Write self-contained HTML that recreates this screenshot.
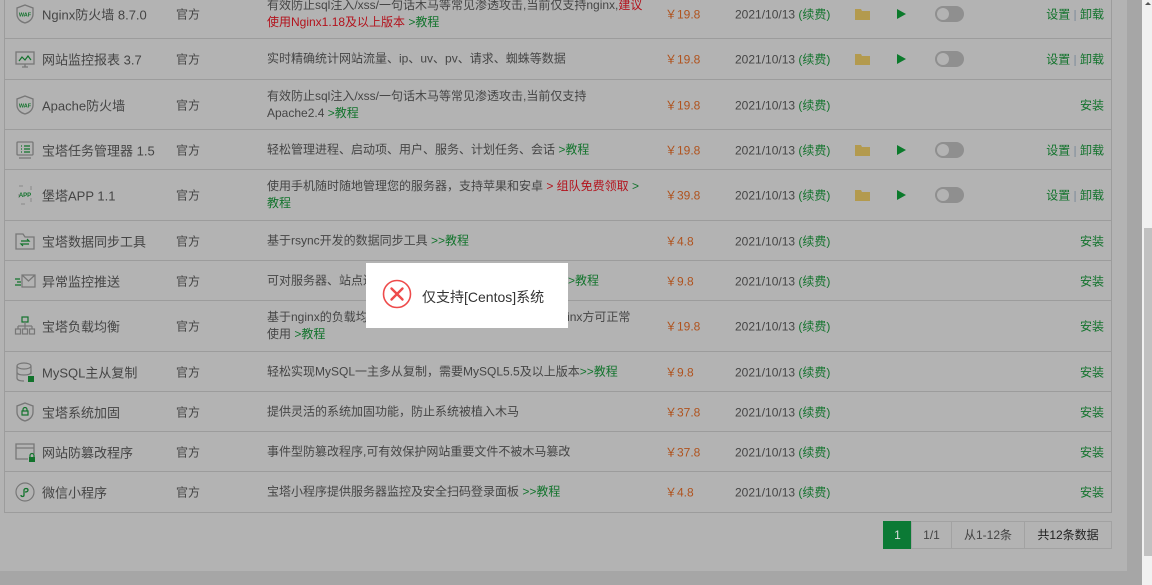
<!DOCTYPE html>
<html><head><meta charset="utf-8">
<style>
*{margin:0;padding:0;box-sizing:border-box}
body{width:1152px;height:585px;overflow:hidden;background:#a6a6a6;font-family:"Liberation Sans","Noto Sans CJK SC",sans-serif;color:#454545;position:relative}
.card{position:absolute;left:0;top:0;width:1127px;height:571px;background:#b3b3b3}
.tbl{position:absolute;left:4px;top:-10px;width:1108px;height:523px;border-left:1px solid #9c9c9c;border-right:1px solid #9c9c9c;border-bottom:1px solid #9c9c9c}
.row{position:absolute;left:0;width:1106px;border-bottom:1px solid #9c9c9c}
.row>*{position:absolute;top:50%;transform:translateY(-50%)}
.ic{left:9px;width:22px;height:22px}
.nm{left:37px;font-size:13px;white-space:nowrap}
.of{left:171px;font-size:12px}
.ds{left:262px;width:376px;font-size:12px;line-height:17px}
.pr{left:660px;font-size:12px;color:#b0531e}
.dt{left:730px;font-size:12px;white-space:nowrap}
.g{color:#12732c}
.r{color:#b3121c}
.fd{left:850px;width:16px;height:12px}
.pl{left:892px;width:0;height:0;border-left:9px solid #0b7a2b;border-top:5.5px solid transparent;border-bottom:5.5px solid transparent}
.tg{left:930px;width:29px;height:16px;border-radius:8px;background:#8f8f8f}
.tg:after{content:"";position:absolute;left:2px;top:2px;width:12px;height:12px;border-radius:50%;background:#b3b3b3}
.ac{right:7px;font-size:12px;color:#12732c;white-space:nowrap}
.ac i{font-style:normal;color:#7a8a99}
.modal{position:absolute;left:366px;top:263px;width:202px;height:65px;background:#fff}
.modal .t{position:absolute;left:56px;top:24px;font-size:14px;color:#333}
.pg{position:absolute;top:521px;height:28px;font-size:12px;line-height:26px;text-align:center;border:1px solid #a2a2a2;color:#444}
.sb{position:absolute;left:1142px;top:0;width:10px;height:585px;background:#f1f1f1}
.th{position:absolute;left:1144px;top:228px;width:8px;height:328px;background:#c1c1c1}
</style></head><body>
<div class="card">
<div class="tbl">
<div class="row" style="top:0;height:49px">
<svg class="ic" viewBox="0 0 22 22"><path d="M11 2 L19 5 V11 C19 16 15 19 11 20 C7 19 3 16 3 11 V5 Z" fill="none" stroke="#777" stroke-width="1.3"/><text x="11" y="13.5" font-size="5.5" text-anchor="middle" fill="#12732c" font-family="Liberation Sans" font-weight="bold">WAF</text></svg>
<div class="nm">Nginx防火墙 8.7.0</div><div class="of">官方</div>
<div class="ds">有效防止sql注入/xss/一句话木马等常见渗透攻击,当前仅支持nginx,<span class="r">建议使用Nginx1.18及以上版本</span> <span class="g">&gt;教程</span></div>
<div class="pr">￥19.8</div><div class="dt">2021/10/13 <span class="g">(续费)</span></div>
<svg class="fd" viewBox="0 0 16 12"><path d="M0 1h6l1 2h8v9H0z" fill="#b39a4e"/></svg><div class="pl"></div><div class="tg"></div>
<div class="ac">设置 <i>|</i> 卸载</div></div>
<div class="row" style="top:49px;height:41px">
<svg class="ic" viewBox="0 0 22 22"><rect x="2" y="4" width="18" height="12" fill="none" stroke="#777" stroke-width="1.3"/><path d="M5 13l3-4 3 3 3-4 3 4" fill="none" stroke="#12732c" stroke-width="1.2"/><path d="M8 19h6M11 16v3" stroke="#777" stroke-width="1.3"/></svg>
<div class="nm">网站监控报表 3.7</div><div class="of">官方</div>
<div class="ds">实时精确统计网站流量、ip、uv、pv、请求、蜘蛛等数据</div>
<div class="pr">￥19.8</div><div class="dt">2021/10/13 <span class="g">(续费)</span></div>
<svg class="fd" viewBox="0 0 16 12"><path d="M0 1h6l1 2h8v9H0z" fill="#b39a4e"/></svg><div class="pl"></div><div class="tg"></div>
<div class="ac">设置 <i>|</i> 卸载</div></div>
<div class="row" style="top:90px;height:50px">
<svg class="ic" viewBox="0 0 22 22"><path d="M11 2 L19 5 V11 C19 16 15 19 11 20 C7 19 3 16 3 11 V5 Z" fill="none" stroke="#777" stroke-width="1.3"/><text x="11" y="13.5" font-size="5.5" text-anchor="middle" fill="#12732c" font-family="Liberation Sans" font-weight="bold">WAF</text></svg>
<div class="nm">Apache防火墙</div><div class="of">官方</div>
<div class="ds">有效防止sql注入/xss/一句话木马等常见渗透攻击,当前仅支持<br>Apache2.4 <span class="g">&gt;教程</span></div>
<div class="pr">￥19.8</div><div class="dt">2021/10/13 <span class="g">(续费)</span></div>
<div class="ac">安装</div></div>
<div class="row" style="top:140px;height:40px">
<svg class="ic" viewBox="0 0 22 22"><rect x="3" y="3" width="16" height="13" rx="1" fill="none" stroke="#777" stroke-width="1.3"/><path d="M7 7h1M7 10h1M7 13h1M10 7h6M10 10h6M10 13h6" stroke="#12732c" stroke-width="1.2"/><path d="M5 19h12" stroke="#777" stroke-width="1.3"/></svg>
<div class="nm">宝塔任务管理器 1.5</div><div class="of">官方</div>
<div class="ds">轻松管理进程、启动项、用户、服务、计划任务、会话 <span class="g">&gt;教程</span></div>
<div class="pr">￥19.8</div><div class="dt">2021/10/13 <span class="g">(续费)</span></div>
<svg class="fd" viewBox="0 0 16 12"><path d="M0 1h6l1 2h8v9H0z" fill="#b39a4e"/></svg><div class="pl"></div><div class="tg"></div>
<div class="ac">设置 <i>|</i> 卸载</div></div>
<div class="row" style="top:180px;height:51px">
<svg class="ic" viewBox="0 0 22 22"><rect x="5" y="2" width="12" height="18" fill="none" stroke="#888" stroke-width="1" stroke-dasharray="4 8"/><text x="11" y="13" font-size="6" text-anchor="middle" fill="#12732c" font-family="Liberation Sans" font-weight="bold">APP</text></svg>
<div class="nm">堡塔APP 1.1</div><div class="of">官方</div>
<div class="ds">使用手机随时随地管理您的服务器，支持苹果和安卓 <span class="r">&gt; 组队免费领取</span> <span class="g">&gt; 教程</span></div>
<div class="pr">￥39.8</div><div class="dt">2021/10/13 <span class="g">(续费)</span></div>
<svg class="fd" viewBox="0 0 16 12"><path d="M0 1h6l1 2h8v9H0z" fill="#b39a4e"/></svg><div class="pl"></div><div class="tg"></div>
<div class="ac">设置 <i>|</i> 卸载</div></div>
<div class="row" style="top:231px;height:40px">
<svg class="ic" viewBox="0 0 22 22"><path d="M2 4h7l2 3h9v12H2z" fill="none" stroke="#777" stroke-width="1.3"/><path d="M7 11h8l-2-2M15 14H7l2 2" fill="none" stroke="#12732c" stroke-width="1.2"/></svg>
<div class="nm">宝塔数据同步工具</div><div class="of">官方</div>
<div class="ds">基于rsync开发的数据同步工具 <span class="g">&gt;&gt;教程</span></div>
<div class="pr">￥4.8</div><div class="dt">2021/10/13 <span class="g">(续费)</span></div>
<div class="ac">安装</div></div>
<div class="row" style="top:271px;height:40px">
<svg class="ic" viewBox="0 0 22 22"><path d="M8 5h13v12H8z M8 5l6.5 6L21 5" fill="none" stroke="#777" stroke-width="1.2"/><path d="M1 9h5M3 12h4M1 15h6" stroke="#12732c" stroke-width="1.2"/></svg>
<div class="nm">异常监控推送</div><div class="of">官方</div>
<div class="ds">可对服务器、站点进行异常监控推送，仅支持Centos7.x<span class="g">&gt;&gt;教程</span></div>
<div class="pr">￥9.8</div><div class="dt">2021/10/13 <span class="g">(续费)</span></div>
<div class="ac">安装</div></div>
<div class="row" style="top:311px;height:51px">
<svg class="ic" viewBox="0 0 22 22"><rect x="8" y="2" width="6" height="5" fill="none" stroke="#12732c" stroke-width="1.2"/><path d="M11 7v4M4 11h14M4 11v3M11 11v3M18 11v3" fill="none" stroke="#777" stroke-width="1.2"/><rect x="1.5" y="14" width="5" height="5" fill="none" stroke="#777" stroke-width="1.2"/><rect x="8.5" y="14" width="5" height="5" fill="none" stroke="#777" stroke-width="1.2"/><rect x="15.5" y="14" width="5" height="5" fill="none" stroke="#777" stroke-width="1.2"/></svg>
<div class="nm">宝塔负载均衡</div><div class="of">官方</div>
<div class="ds">基于nginx的负载均衡，需要安装Nginx1.18以上版本及nginx方可正常<br>使用 <span class="g">&gt;教程</span></div>
<div class="pr">￥19.8</div><div class="dt">2021/10/13 <span class="g">(续费)</span></div>
<div class="ac">安装</div></div>
<div class="row" style="top:362px;height:40px">
<svg class="ic" viewBox="0 0 22 22"><ellipse cx="10" cy="5" rx="7" ry="3" fill="none" stroke="#777" stroke-width="1.2"/><path d="M3 5v12c0 2 3 3 7 3M17 5v8M3 11c0 2 3 3 7 3s7-1 7-3" fill="none" stroke="#777" stroke-width="1.2"/><rect x="14" y="15" width="6" height="6" fill="#12732c"/></svg>
<div class="nm">MySQL主从复制</div><div class="of">官方</div>
<div class="ds">轻松实现MySQL一主多从复制，需要MySQL5.5及以上版本<span class="g">&gt;&gt;教程</span></div>
<div class="pr">￥9.8</div><div class="dt">2021/10/13 <span class="g">(续费)</span></div>
<div class="ac">安装</div></div>
<div class="row" style="top:402px;height:40px">
<svg class="ic" viewBox="0 0 22 22"><path d="M11 2 L19 5 V11 C19 16 15 19 11 20 C7 19 3 16 3 11 V5 Z" fill="none" stroke="#777" stroke-width="1.3"/><rect x="8" y="10" width="6" height="4" fill="none" stroke="#12732c" stroke-width="1.2"/><path d="M9 10V8.5a2 2 0 0 1 4 0V10" fill="none" stroke="#12732c" stroke-width="1.2"/></svg>
<div class="nm">宝塔系统加固</div><div class="of">官方</div>
<div class="ds">提供灵活的系统加固功能，防止系统被植入木马</div>
<div class="pr">￥37.8</div><div class="dt">2021/10/13 <span class="g">(续费)</span></div>
<div class="ac">安装</div></div>
<div class="row" style="top:442px;height:40px">
<svg class="ic" viewBox="0 0 22 22"><path d="M14 18H2V3h18v10M2 7h18" fill="none" stroke="#777" stroke-width="1.3"/><rect x="15" y="16" width="6" height="5" fill="#12732c"/><path d="M16 16v-1.5a2 2 0 0 1 4 0V16" fill="none" stroke="#12732c" stroke-width="1.2"/></svg>
<div class="nm">网站防篡改程序</div><div class="of">官方</div>
<div class="ds">事件型防篡改程序,可有效保护网站重要文件不被木马篡改</div>
<div class="pr">￥37.8</div><div class="dt">2021/10/13 <span class="g">(续费)</span></div>
<div class="ac">安装</div></div>
<div class="row" style="top:482px;height:40px;border-bottom:none">
<svg class="ic" viewBox="0 0 22 22"><circle cx="11" cy="11" r="9" fill="none" stroke="#777" stroke-width="1.2"/><path d="M7 14c0 2 3 2 3 0V9c0-2 4-2 4 0s-2 2-3 2" fill="none" stroke="#12732c" stroke-width="1.3"/></svg>
<div class="nm">微信小程序</div><div class="of">官方</div>
<div class="ds">宝塔小程序提供服务器监控及安全扫码登录面板 <span class="g">&gt;&gt;教程</span></div>
<div class="pr">￥4.8</div><div class="dt">2021/10/13 <span class="g">(续费)</span></div>
<div class="ac">安装</div></div>
</div>
<div class="pg" style="left:883px;width:29px;background:#0b7a35;border-color:#0b7a35;color:#ddd">1</div>
<div class="pg" style="left:911px;width:41px">1/1</div>
<div class="pg" style="left:951px;width:74px">从1-12条</div>
<div class="pg" style="left:1024px;width:88px;color:#222">共12条数据</div>
</div>
<div class="modal">
<svg style="position:absolute;left:16px;top:16px" width="30" height="30" viewBox="0 0 30 30"><circle cx="15" cy="15" r="13.5" fill="none" stroke="#ee4b4b" stroke-width="1.6"/><path d="M9.5 9.5l11 11M20.5 9.5l-11 11" stroke="#ee4b4b" stroke-width="2.4" stroke-linecap="round"/></svg>
<div class="t">仅支持[Centos]系统</div></div>
<div class="sb"></div><div class="th"></div>
<div style="position:absolute;left:1145px;top:2px;width:0;height:0;border-left:3px solid transparent;border-right:3px solid transparent;border-bottom:3px solid #555"></div>
</body></html>
